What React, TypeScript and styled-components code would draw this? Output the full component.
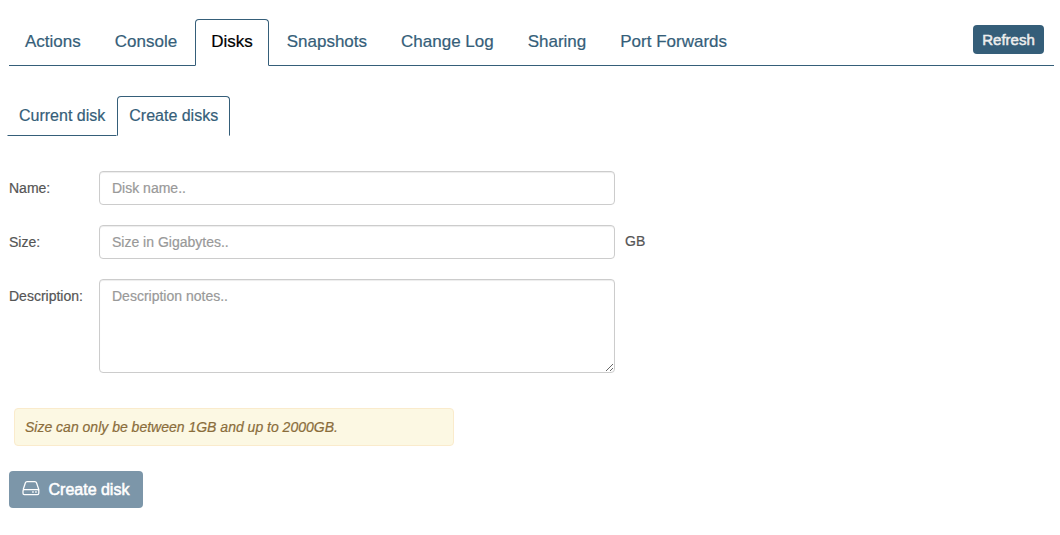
import React from "react";
import styled, { createGlobalStyle } from "styled-components";

const GlobalStyle = createGlobalStyle`
  * { box-sizing: border-box; }
  body {
    margin: 0;
    background: #fff;
    color: #555;
    font: 14px/20px "Liberation Sans", Arial, sans-serif;
    -webkit-text-stroke: 0.2px;
  }
`;

const Page = styled.main`
  padding: 19px 6px 0 9px;
`;

const Header = styled.header`
  display: flex;
  justify-content: space-between;
  align-items: flex-start;
  height: 47px;
  border-bottom: 1px solid #355e79;
`;

const TabList = styled.nav`
  display: flex;
  gap: 2px;
`;

const Tab = styled.a<{ $active?: boolean }>`
  height: 47px;
  padding: 0 15px;
  border: 1px solid ${(p) => (p.$active ? "#355e79" : "transparent")};
  border-bottom-color: ${(p) => (p.$active ? "#fff" : "transparent")};
  border-radius: 4px 4px 0 0;
  background: ${(p) => (p.$active ? "#fff" : "transparent")};
  color: ${(p) => (p.$active ? "#000" : "#355e79")};
  font-size: 17px;
  line-height: 43px;
  white-space: nowrap;
`;

const RefreshButton = styled.button`
  width: 71px;
  height: 29px;
  margin: 6px 10px 0 0;
  padding: 0;
  border: 0;
  border-radius: 4px;
  background: #355e79;
  color: #eee;
  font: 15px/29px "Liberation Sans", Arial, sans-serif;
  -webkit-text-stroke: 0.5px #eee;
`;

const SubTabList = styled.nav`
  display: flex;
  margin: 30px 0 0 -2px;
`;

const SubTab = styled.a<{ $active?: boolean }>`
  height: 40px;
  padding: 0 11px;
  border: 1px solid ${(p) => (p.$active ? "#355e79" : "transparent")};
  border-bottom-color: ${(p) => (p.$active ? "transparent" : "#355e79")};
  border-radius: ${(p) => (p.$active ? "4px 4px 0 0" : "0")};
  color: #355e79;
  font-size: 16px;
  line-height: 38px;
`;

const Form = styled.form`
  display: flex;
  flex-direction: column;
  gap: 20px;
  margin-top: 35px;
`;

const Field = styled.div`
  display: flex;
  align-items: flex-start;
`;

const Label = styled.label`
  width: 90px;
  padding-top: 7px;
`;

const Input = styled.input`
  width: 516px;
  height: 34px;
  padding: 6px 12px;
  border: 1px solid #ccc;
  border-radius: 4px;
  box-shadow: inset 0 1px 1px rgba(0, 0, 0, 0.075);
  background: #fff;
  font: 14px/20px "Liberation Sans", Arial, sans-serif;
  &::placeholder { color: #999; opacity: 1; -webkit-text-stroke: 0.2px #999; }
`;

const TextArea = styled(Input)`
  display: block;
  height: 94px;
  resize: vertical;
`;

const Unit = styled.span`
  padding: 6px 0 0 10px;
`;

const Notice = styled.p`
  width: 440px;
  height: 38px;
  margin: 35px 0 0 5px;
  padding: 8px 10px;
  border: 1px solid #faebcc;
  border-radius: 4px;
  background: #fcf8e3;
  color: #8a6d3b;
  font-style: italic;
`;

const CreateButton = styled.button`
  display: flex;
  align-items: center;
  gap: 9px;
  width: 134px;
  height: 37px;
  margin-top: 25px;
  padding: 0 0 0 12.5px;
  border: 0;
  border-radius: 4px;
  background: #7c96a9;
  color: #fff;
  font: 16px/37px "Liberation Sans", Arial, sans-serif;
  -webkit-text-stroke: 0.55px #fff;
  white-space: nowrap;
`;

const DriveGlyph = styled.svg`
  width: 18px;
  height: 16px;
  flex: none;
  margin-top: -3px;
`;

const tabs = ["Actions", "Console", "Disks", "Snapshots", "Change Log", "Sharing", "Port Forwards"];

export default function App() {
  return (
    <Page>
      <GlobalStyle />
      <Header>
        <TabList>
          {tabs.map((name) => (
            <Tab key={name} $active={name === "Disks"}>{name}</Tab>
          ))}
        </TabList>
        <RefreshButton type="button">Refresh</RefreshButton>
      </Header>
      <SubTabList>
        <SubTab>Current disk</SubTab>
        <SubTab $active>Create disks</SubTab>
      </SubTabList>
      <Form>
        <Field>
          <Label htmlFor="name">Name:</Label>
          <Input id="name" placeholder="Disk name.." />
        </Field>
        <Field>
          <Label htmlFor="size">Size:</Label>
          <Input id="size" placeholder="Size in Gigabytes.." />
          <Unit>GB</Unit>
        </Field>
        <Field>
          <Label htmlFor="description">Description:</Label>
          <TextArea as="textarea" id="description" placeholder="Description notes.." />
        </Field>
      </Form>
      <Notice>Size can only be between 1GB and up to 2000GB.</Notice>
      <CreateButton type="button">
        <DriveGlyph viewBox="0 0 18 16" fill="none" stroke="#fff" strokeWidth="1.25" strokeLinejoin="round">
          <path d="M1.2 9.5 3.4 2.7Q3.8 1.5 5 1.5H12.9Q14.1 1.5 14.5 2.7L16.8 9.5V13.2Q16.8 14.5 15.5 14.5H2.3Q1 14.5 1 13.2V10.8Q1 9.5 2.3 9.5H15.5Q16.8 9.5 16.8 10.8" />
          <path d="M10.2 12h1.5M13.2 12h1.5" strokeWidth="1.5" />
        </DriveGlyph>
        Create disk
      </CreateButton>
    </Page>
  );
}
